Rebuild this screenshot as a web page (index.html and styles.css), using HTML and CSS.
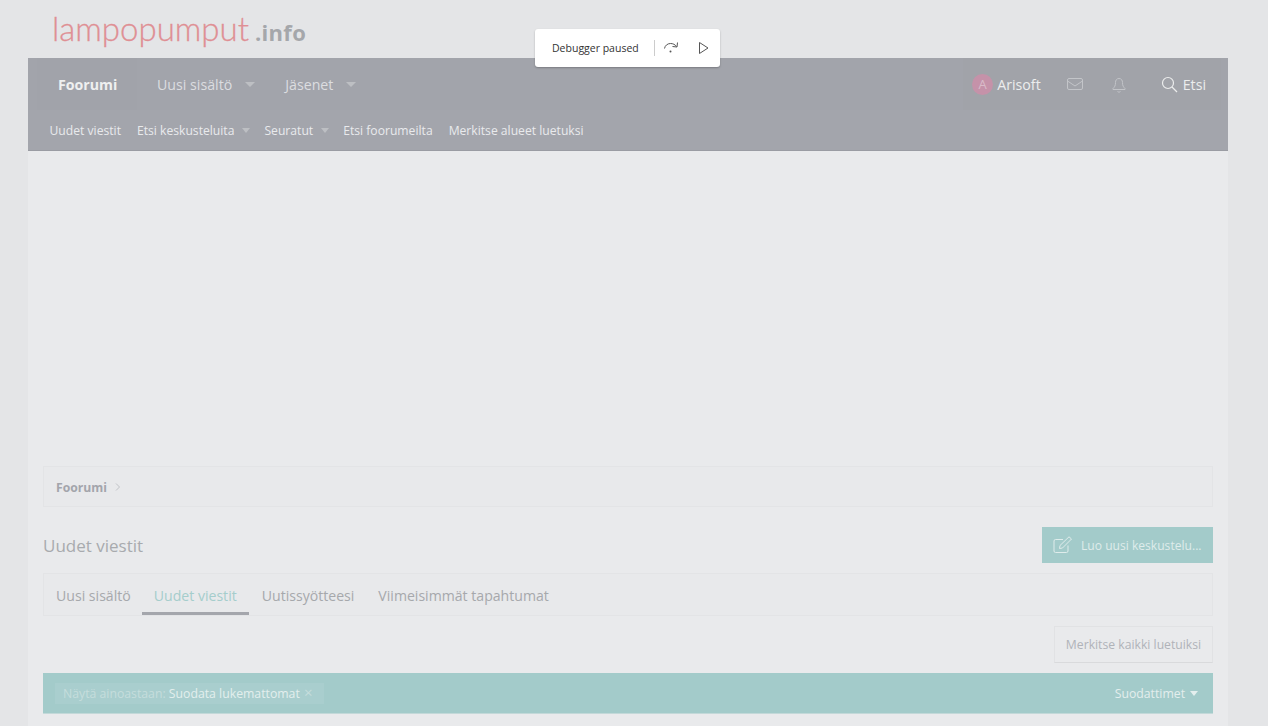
FILE: index.html

```html
<!DOCTYPE html>
<html lang="fi">
<head>
    <meta charset="UTF-8">
    <title>Uudet viestit | lampopumput.info</title>
    <link rel="stylesheet" href="styles.css">
</head>
<body>
    <div class="debugger">
        <span class="debugger-label">Debugger paused</span>
        <span class="debugger-sep"></span>
        <svg class="debugger-icon" width="16" height="16" viewBox="0 0 16 16" fill="none" stroke="#555" stroke-width="1"><path d="M1.500 8.500C2 5.500 4.500 3.500 7.500 3.500c2.500 0 4.500 1 6 3"/><path d="M14.500 2.500l-.5 4.500-4.500-.5"/><circle cx="7.500" cy="11.500" r="1" fill="#555" stroke="none"/></svg>
        <svg class="debugger-icon" width="16" height="16" viewBox="0 0 16 16" fill="none" stroke="#555" stroke-width="1"><path d="M4.500 2.500V13.500L13 8Z"/></svg>
    </div>

    <header class="logo-row">
        <span class="logo-main">lampopumput</span>
        <span class="logo-info">.info</span>
    </header>

    <div class="wrapper">
        <nav class="nav">
            <a class="nav-item nav-active">Foorumi</a>
            <a class="nav-item">Uusi sisältö<i class="caret caret-big"></i></a>
            <a class="nav-item">Jäsenet<i class="caret caret-big"></i></a>
            <div class="nav-right">
                <a class="nav-user"><span class="avatar">A</span>Arisoft</a>
                <a class="nav-icon">
                    <svg width="18" height="16" viewBox="0 0 18 16" fill="none" stroke="#c3c5c9" stroke-width="1"><rect x="1.500" y="2.500" width="15" height="11" rx="1.500"/><path d="M1.500 5l7.500 5 7.500-5"/></svg>
                </a>
                <a class="nav-icon">
                    <svg class="bell" width="14" height="16" viewBox="0 0 14 16" fill="none" stroke="#c3c5c9" stroke-width="1"><path d="M7 1.500c-2.500 0-3.500 2-3.500 4 0 3.500-1 4.500-2.500 6v1h12v-1c-1.500-1.500-2.500-2.500-2.500-6 0-2-1-4-3.500-4z"/><path d="M5.500 14.500c.5.800 2.500.8 3 0"/></svg>
                </a>
                <a class="nav-search">
                    <svg width="17" height="17" viewBox="0 0 17 17" fill="none" stroke="#eceded" stroke-width="1.200"><circle cx="7" cy="7" r="5.500"/><path d="M11 11l5 5"/></svg>
                    Etsi
                </a>
            </div>
        </nav>
        <div class="subnav">
            <a>Uudet viestit</a>
            <a>Etsi keskusteluita<i class="caret"></i></a>
            <a>Seuratut<i class="caret"></i></a>
            <a>Etsi foorumeilta</a>
            <a>Merkitse alueet luetuksi</a>
        </div>

        <main class="content">
            <div class="ad-space"></div>

            <div class="breadcrumb box">
                <b>Foorumi</b>
                <svg width="6" height="8" viewBox="0 0 6 8" fill="none" stroke="#c0c2c6" stroke-width="1"><path d="M1 .5L4.500 4 1 7.500"/></svg>
            </div>

            <div class="title-row">
                <h1>Uudet viestit</h1>
                <a class="btn-primary">
                    <svg width="20" height="18" viewBox="0 0 20 18" fill="none" stroke="#dfeceb" stroke-width="1"><path d="M15 9.500V15a1.500 1.500 0 0 1-1.500 1.500H2.500A1.500 1.500 0 0 1 1 15V5a1.500 1.500 0 0 1 1.500-1.500H10"/><path d="M7 9.500L6.500 12.500 9.500 12 18.500 3 16 .8Z"/></svg>
                    Luo uusi keskustelu...
                </a>
            </div>

            <div class="tabs box">
                <a class="tab">Uusi sisältö</a>
                <a class="tab tab-active">Uudet viestit</a>
                <a class="tab">Uutissyötteesi</a>
                <a class="tab">Viimeisimmät tapahtumat</a>
            </div>

            <div class="actions">
                <a class="btn-plain">Merkitse kaikki luetuiksi</a>
            </div>

            <div class="filter-bar">
                <span class="filter-chip">
                    <span class="filter-label">Näytä ainoastaan:</span> Suodata lukemattomat <span class="filter-x">×</span>
                </span>
                <a class="filter-menu">Suodattimet<i class="caret caret-light"></i></a>
            </div>
        </main>
    </div>
</body>
</html>
```

FILE: styles.css

```css
* {
    margin: 0;
    padding: 0;
    box-sizing: border-box;
    font-family: "Open Sans", "Noto Sans", sans-serif;
}

body {
    height: 726px;
    overflow: hidden;
    background: #e4e5e7;
    position: relative;
}

.logo-row {
    height: 58px;
    padding: 8px 0 0 52px;
    display: flex;
    align-items: baseline;
    gap: 6px;
}

.logo-main {
    font-family: Lato, sans-serif;
    font-size: 33px;
    font-weight: 300;
    -webkit-text-stroke: 0.3px #df8f94;
    color: #df8f94;
}

.logo-info {
    font-family: "Open Sans", sans-serif;
    font-size: 22px;
    font-weight: 700;
    letter-spacing: 0.3px;
    color: #a5a7ab;
}

.debugger {
    position: absolute;
    left: 535px;
    top: 29px;
    width: 185px;
    height: 38px;
    background: #fff;
    border-radius: 3px;
    box-shadow: 0 1px 2px rgba(0, 0, 0, 0.25);
    display: flex;
    align-items: center;
    padding-left: 17px;
    z-index: 2;
}

.debugger-label {
    font-size: 10.500px;
    color: #333;
    width: 102px;
}

.debugger-sep {
    width: 1px;
    height: 16px;
    background: #ccc;
}

.debugger-icon {
    margin-left: 8px;
}

.debugger-icon:last-child {
    margin-left: 16px;
}

.wrapper {
    width: 1200px;
    margin-left: 28px;
}

.nav {
    height: 52px;
    background: #a2a4ab;
    display: flex;
    align-items: stretch;
    color: #eceded;
    font-size: 14.200px;
}

.nav-item {
    display: flex;
    align-items: center;
    padding: 0 10px 0 20px;
    color: #dcdde0;
}

.nav-active {
    margin-left: 9px;
    padding: 0 20px 0 21px;
    width: 100px;
    background: #a1a3aa;
    font-weight: 700;
    color: #eff0f0;
}

.nav-right {
    margin-left: auto;
    display: flex;
    align-items: stretch;
    background: #a1a3a9;
    margin-right: 7px;
}

.nav-user,
.nav-icon,
.nav-search {
    display: flex;
    align-items: center;
}

.nav-user {
    padding: 0 12px 0 9px;
    gap: 4px;
}

.avatar {
    width: 21px;
    height: 21px;
    border-radius: 50%;
    background: #c592a9;
    color: #d9bcc9;
    font-size: 13px;
    display: flex;
    align-items: center;
    justify-content: center;
}

.nav-icon {
    width: 44px;
    justify-content: center;
}

.bell {
    margin-top: 2px;
}

.nav-search {
    margin-left: 5px;
    padding: 0 15px;
    gap: 5px;
}

.caret {
    display: inline-block;
    width: 0;
    height: 0;
    margin-left: 8px;
    margin-right: -2px;
    border-left: 4px solid transparent;
    border-right: 4px solid transparent;
    border-top: 5px solid #bdbfc3;
    vertical-align: 2px;
}

.caret-big {
    margin-left: 13px;
    margin-right: 0;
    border-left-width: 5px;
    border-right-width: 5px;
    border-top-width: 5px;
}

.caret-light {
    margin-left: 5px;
    margin-right: 0;
    border-top-color: #e4efee;
}

.subnav {
    height: 41px;
    background: #a3a5ac;
    border-bottom: 1px solid #9a9ca3;
    display: flex;
    align-items: center;
    gap: 16px;
    padding-left: 21.500px;
    font-size: 12.150px;
    color: #e9eaec;
}

.content {
    height: 575px;
    background: #e9eaec;
    padding: 0 15px;
}

.ad-space {
    height: 315px;
}

.box {
    background: #e8e9eb;
    border: 1px solid #e3e4e6;
}

.breadcrumb {
    height: 41px;
    display: flex;
    align-items: center;
    gap: 8px;
    padding: 1px 0 0 12px;
    font-size: 12.200px;
    color: #a3a5ab;
}

.title-row {
    height: 36px;
    margin-top: 20px;
    display: flex;
    justify-content: space-between;
    align-items: center;
}

h1 {
    font-size: 17px;
    font-weight: 400;
    color: #a8aaae;
}

.btn-primary {
    width: 171px;
    height: 36px;
    background: #a3cbca;
    display: flex;
    align-items: center;
    gap: 8px;
    padding-left: 11px;
    font-size: 12.100px;
    color: #dfeceb;
}

.tabs {
    height: 43px;
    margin-top: 10px;
    display: flex;
    font-size: 14.100px;
}

.tab {
    padding: 0 12px;
    line-height: 43px;
    color: #a6a8ac;
    height: 41px;
}

.tab:first-child {
    padding-right: 11px;
}

.tab-active {
    color: #a5cdcc;
    border-bottom: 3px solid #a4a6ac;
    margin-right: 1px;
}

.actions {
    display: flex;
    justify-content: flex-end;
    margin-top: 10px;
}

.btn-plain {
    width: 159px;
    height: 37px;
    border: 1px solid #e1e2e4;
    border-bottom-color: #d9dadc;
    display: flex;
    align-items: center;
    justify-content: center;
    font-size: 12.200px;
    color: #b0b3b9;
}

.filter-bar {
    height: 41px;
    margin-top: 10px;
    background: #a3cbca;
    border-bottom: 1px solid #c3d9d9;
    display: flex;
    justify-content: space-between;
    align-items: center;
    padding: 0 15px 0 12px;
    font-size: 12.250px;
    color: #e3eeed;
}

.filter-chip {
    background: #a9cece;
    padding: 2px 11px 2px 8px;
}

.filter-label {
    color: #c5dddc;
}

.filter-x {
    color: #c5dddc;
    font-size: 15px;
    line-height: 1;
    margin-left: 1px;
}

.filter-menu {
    display: flex;
    align-items: center;
}
```
